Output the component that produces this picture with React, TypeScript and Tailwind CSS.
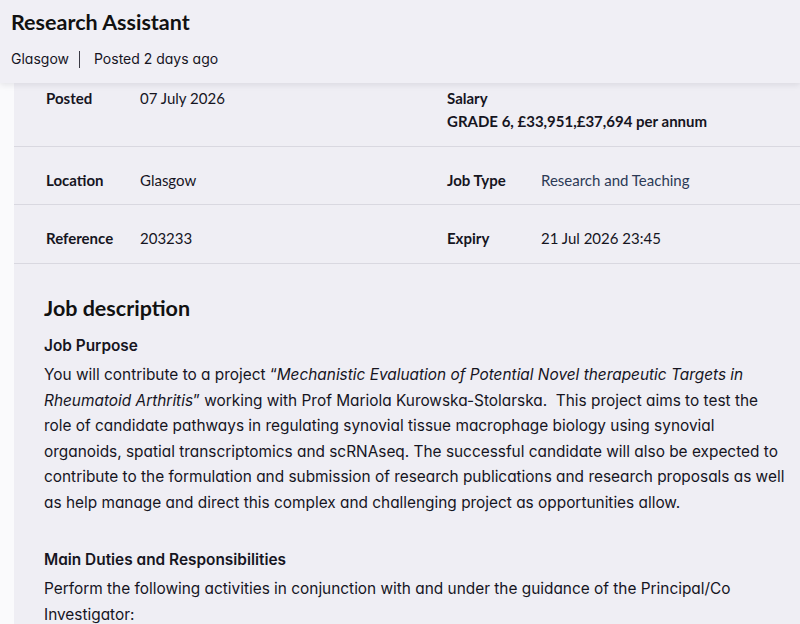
const details = [
  { label: "Location", value: "Glasgow", label2: "Job Type", value2: "Research and Teaching", pb: "pb-[12px]" },
  { label: "Reference", value: "203233", label2: "Expiry", value2: "21 Jul 2026 23:45", pb: "pb-[13px]" },
];

const body = "font-['Inter',sans-serif] [font-feature-settings:'cv11']";

export default function App() {
  return (
    <div className="min-h-screen bg-[#fafafc] font-['Lato',sans-serif] text-[#16151f]">
      <header className="relative z-10 h-[83px] bg-[#f0eff5] px-[11px] pt-[7px] shadow-[0_2px_6px_rgba(40,40,60,0.10)]">
        <h1 className="text-[21.5px] font-bold leading-[30px] text-[#111]">Research Assistant</h1>
        <div className={`mt-[12px] flex items-center text-[14px] leading-[20px] ${body}`}>
          <span>Glasgow</span>
          <span className="ml-[10px] mr-[14px] h-[17px] w-px bg-[#3a3a44]" />
          <span>Posted 2 days ago</span>
        </div>
      </header>

      <main className="ml-[14px] bg-[#efeef4]">
        <div className="flex border-b border-[#d9d8e0] px-[32px] pt-[4px] pb-[13px] text-[15px] leading-[23px]">
          <div className="flex w-[401px]">
            <span className="w-[94px] font-bold">Posted</span>
            <span>07 July 2026</span>
          </div>
          <div className="flex flex-col font-bold">
            <span>Salary</span>
            <span>GRADE 6, £33,951,£37,694 per annum</span>
          </div>
        </div>
        {details.map((d) => (
          <div
            key={d.label}
            className={`flex border-b border-[#d9d8e0] px-[32px] pt-[22px] ${d.pb} text-[15px] leading-[23px]`}
          >
            <div className="flex w-[401px]">
              <span className="w-[94px] font-bold">{d.label}</span>
              <span>{d.value}</span>
            </div>
            <div className="flex">
              <span className="w-[94px] font-bold">{d.label2}</span>
              <span className={d.label2 === "Job Type" ? "text-[#2c3a56]" : ""}>{d.value2}</span>
            </div>
          </div>
        ))}

        <section className="px-[30px] pt-[29px] pb-[20px]">
          <h2 className="text-[21.5px] font-bold leading-[30px] text-[#111]">Job description</h2>
          <div className={`w-[741px] text-[15.4px] ${body}`}>
            <h3 className="mt-[13px] font-semibold leading-[20px]">Job Purpose</h3>
            <p className="mt-[6px] leading-[25.5px]">
              You will contribute to a project “
              <em>Mechanistic Evaluation of Potential Novel therapeutic Targets in Rheumatoid Arthritis</em>” working
              with Prof Mariola Kurowska-Stolarska.&nbsp; This project aims to test the role of candidate pathways in
              regulating synovial tissue macrophage biology using synovial organoids, spatial transcriptomics and
              scRNAseq. The successful candidate will also be expected to contribute to the formulation and submission
              of research publications and research proposals as well as help manage and direct this complex and
              challenging project as opportunities allow.
            </p>
            <h3 className="mt-[35px] font-semibold leading-[20px]">Main Duties and Responsibilities</h3>
            <p className="mt-[6px] leading-[25.5px]">
              Perform the following activities in conjunction with and under the guidance of the Principal/Co
              Investigator:
            </p>
          </div>
        </section>
      </main>
    </div>
  );
}
